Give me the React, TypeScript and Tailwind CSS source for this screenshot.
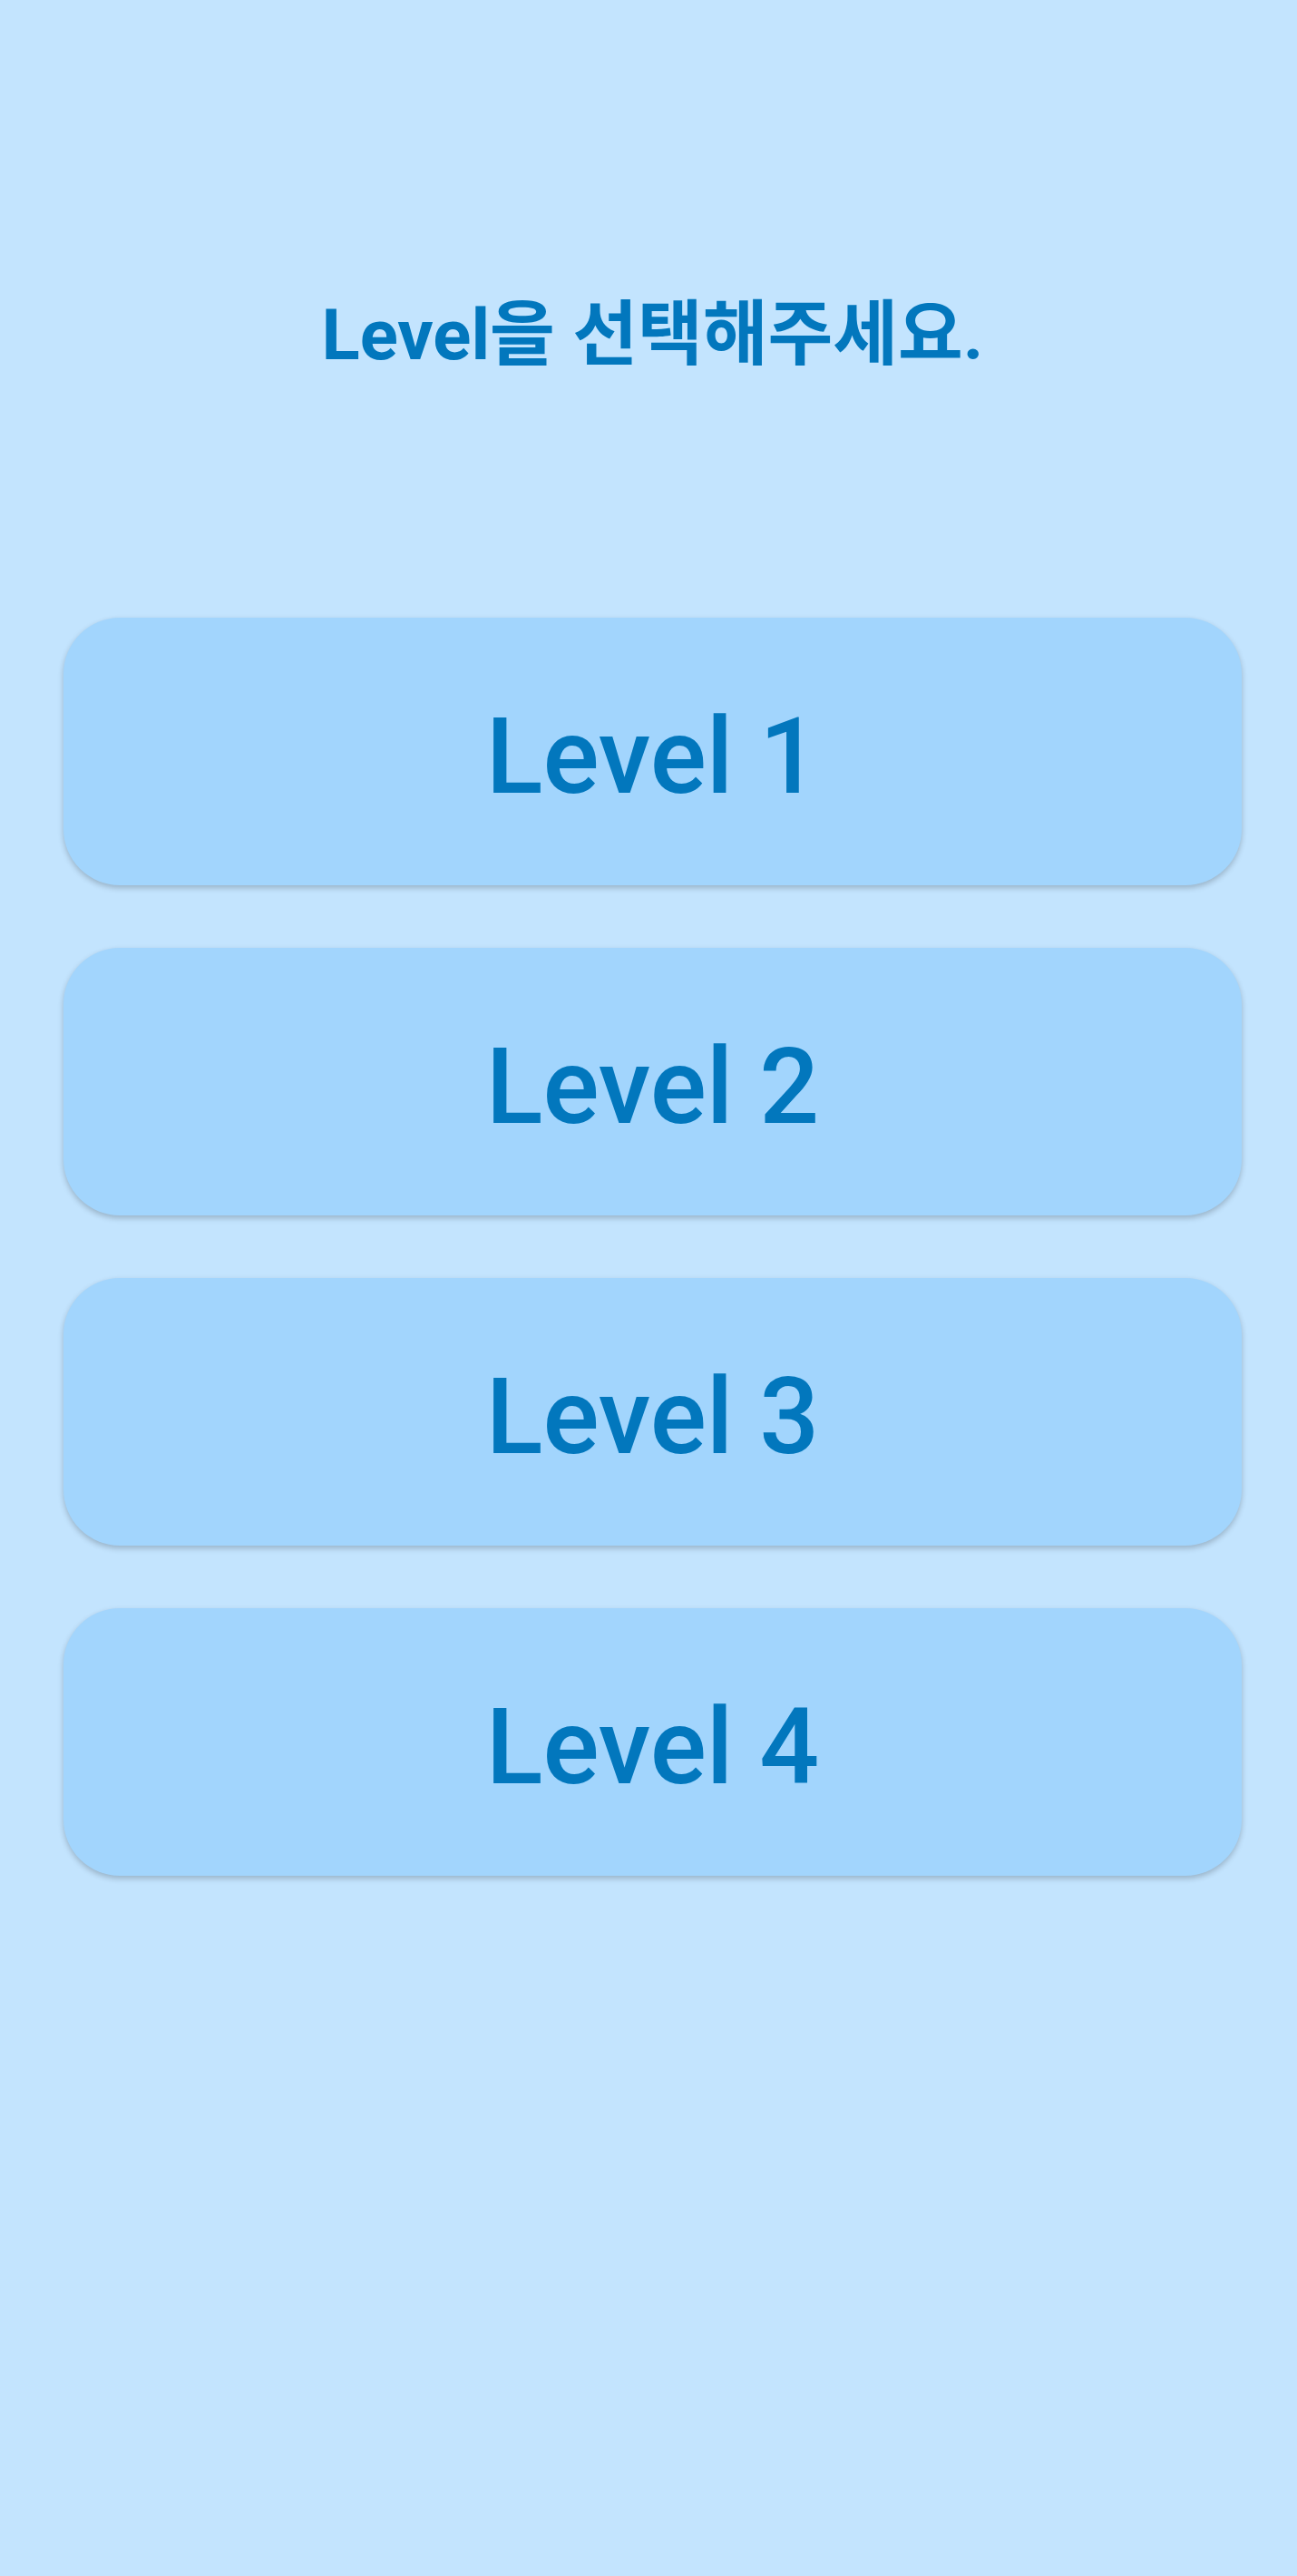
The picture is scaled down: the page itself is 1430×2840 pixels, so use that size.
const levels = [1, 2, 3, 4];

function LevelButton({ level }: { level: number }) {
  return (
    <button
      type="button"
      className="flex h-[295px] w-full items-center justify-center rounded-[62px] bg-[#a2d5fd] pt-[11px] shadow-[0_3px_6px_rgba(0,0,0,0.22)]"
    >
      <span className="text-[116px] font-medium leading-none text-[#0277bd]">Level {level}</span>
    </button>
  );
}

export default function App() {
  return (
    <div
      className="min-h-screen bg-[#c3e4fe] pl-[70px] pr-[61px]"
      style={{ fontFamily: 'Roboto, "Noto Sans CJK KR", sans-serif' }}
    >
      <h1 className="pt-[325px] text-center text-[78px] font-bold leading-[90px] text-[#0277bd]">
        Level을 선택해주세요.
      </h1>
      <div className="mt-[266px] flex flex-col gap-[69px]">
        {levels.map((level) => (
          <LevelButton key={level} level={level} />
        ))}
      </div>
    </div>
  );
}
